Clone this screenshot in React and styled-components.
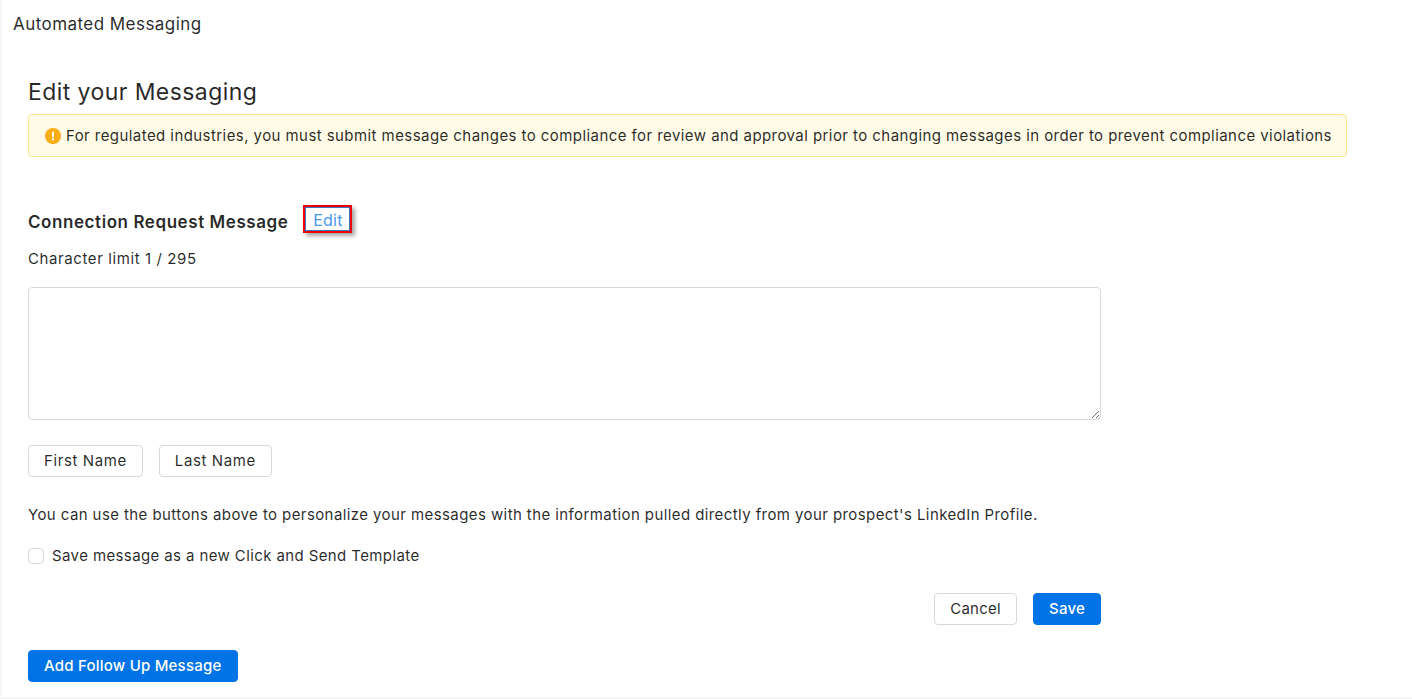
import React from "react";
import styled, { createGlobalStyle } from "styled-components";

const Global = createGlobalStyle`
  html, body { margin: 0; padding: 0; background: #f5f5f5; }
  body { font-family: Inter, "Liberation Sans", sans-serif; color: rgba(0,0,0,.85); }
  * { box-sizing: border-box; }
`;
const Page = styled.div`
  height: 697px;
  margin-left: 2px;
  background: #fff;
  overflow: hidden;
`;
const TopBar = styled.div`
  height: 48px;
  padding: 13px 0 0 11px;
  font-size: 17px;
  line-height: 22px;
  letter-spacing: 0.45px;
`;
const Content = styled.div`
  padding: 29px 0 0 26px;
  width: 1345px;
`;
const Title = styled.h2`
  margin: 0;
  font-size: 23px;
  line-height: 30px;
  font-weight: 400;
  letter-spacing: 0.42px;
`;
const Alert = styled.div`
  margin-top: 7px;
  height: 43px;
  display: flex;
  align-items: center;
  gap: 5px;
  padding-left: 16px;
  background: #fffbe6;
  border: 1px solid #ffe58f;
  border-radius: 4px;
  font-size: 15px;
  letter-spacing: 0.43px;
  white-space: nowrap;
`;
const HeadRow = styled.div`
  margin-top: 50px;
  display: flex;
  align-items: flex-start;
  height: 28px;
`;
const Heading = styled.div`
  margin-top: 4px;
  font-size: 17px;
  font-weight: 600;
  letter-spacing: 0.57px;
  line-height: 22px;
`;
const EditHighlight = styled.button`
  margin: -2px 0 0 15px;
  width: 49px;
  height: 28px;
  padding: 2px 0 0;
  background: #fff;
  color: #4a96ec;
  font: inherit;
  font-size: 16px;
  letter-spacing: 0.25px;
  border: 2px solid #ee0000;
  outline: 1px solid #3c78c8;
  outline-offset: -3px;
  box-shadow: 3px 3px 4px rgba(0,0,0,.35);
`;
const Limit = styled.div`
  margin-top: 14px;
  font-size: 15px;
  line-height: 20px;
  letter-spacing: 0.6px;
`;
const MessageBox = styled.textarea`
  display: block;
  margin-top: 18px;
  width: 1073px;
  height: 133px;
  border: 1px solid #d9d9d9;
  border-radius: 4px;
  background: #fff;
  outline: none;
`;
const TokenRow = styled.div`
  margin-top: 25px;
  display: flex;
  gap: 16px;
`;
const Btn = styled.button`
  height: 32px;
  padding: 0 15px 2px;
  border-radius: 4px;
  font-family: inherit;
  font-size: 15px;
  letter-spacing: ${(p) => (p.$primary ? "0.22px" : "0.6px")};
  white-space: nowrap;
  background: ${(p) => (p.$primary ? "#0073e6" : "#fff")};
  color: ${(p) => (p.$primary ? "#fff" : "rgba(0,0,0,.85)")};
  border: 1px solid ${(p) => (p.$primary ? "#0073e6" : "#d9d9d9")};
  font-weight: ${(p) => (p.$primary ? 500 : 400)};
`;
const CancelBtn = styled(Btn)`
  letter-spacing: 0.27px;
`;
const Hint = styled.p`
  margin: 28px 0 0;
  font-size: 15px;
  line-height: 20px;
  letter-spacing: 0.41px;
`;
const CheckRow = styled.label`
  margin-top: 21px;
  display: flex;
  align-items: center;
  gap: 8px;
  font-size: 15px;
  line-height: 20px;
  letter-spacing: 0.39px;
`;
const Box = styled.span`
  width: 16px;
  height: 16px;
  border: 1px solid #d9d9d9;
  border-radius: 4px;
  background: #fff;
`;
const Actions = styled.div`
  margin-top: 27px;
  width: 1073px;
  display: flex;
  justify-content: flex-end;
  gap: 16px;
`;
const FollowUp = styled(Btn)`
  display: block;
  margin-top: 25px;
`;
const WarnIcon = () => (
  <svg width="16" height="16" viewBox="0 0 16 16" aria-hidden="true">
    <circle cx="8" cy="8" r="8" fill="#faad14" />
    <rect x="7.1" y="3.6" width="1.8" height="5.8" rx=".6" fill="#fff" />
    <circle cx="8" cy="11.4" r="1.05" fill="#fff" />
  </svg>
);

export default function App() {
  return (
    <>
      <Global />
      <Page>
        <TopBar>Automated Messaging</TopBar>
        <Content>
          <Title>Edit your Messaging</Title>
          <Alert>
            <WarnIcon />
            For regulated industries, you must submit message changes to compliance for review and approval prior to changing messages in order to prevent compliance violations
          </Alert>
          <HeadRow>
            <Heading>Connection Request Message</Heading>
            <EditHighlight>Edit</EditHighlight>
          </HeadRow>
          <Limit>Character limit 1 / 295</Limit>
          <MessageBox />
          <TokenRow>
            <Btn>First Name</Btn>
            <Btn>Last Name</Btn>
          </TokenRow>
          <Hint>You can use the buttons above to personalize your messages with the information pulled directly from your prospect's LinkedIn Profile.</Hint>
          <CheckRow><Box />Save message as a new Click and Send Template</CheckRow>
          <Actions>
            <CancelBtn>Cancel</CancelBtn>
            <Btn $primary>Save</Btn>
          </Actions>
          <FollowUp $primary>Add Follow Up Message</FollowUp>
        </Content>
      </Page>
    </>
  );
}
